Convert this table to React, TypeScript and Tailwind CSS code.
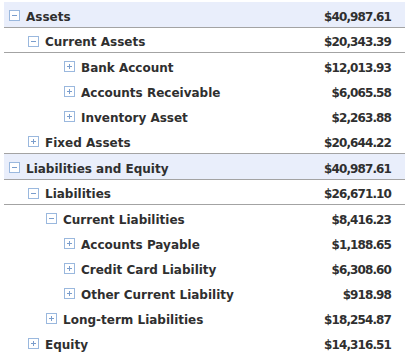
import React from 'react';

type Row = {
  label: string;
  amount: string;
  indent: number;
  open: boolean;
  top?: boolean;
  line?: boolean;
};

const rows: Row[] = [
  { label: 'Assets', amount: '$40,987.61', indent: 0, open: true, top: true },
  { label: 'Current Assets', amount: '$20,343.39', indent: 19, open: true, line: true },
  { label: 'Bank Account', amount: '$12,013.93', indent: 55, open: false },
  { label: 'Accounts Receivable', amount: '$6,065.58', indent: 55, open: false },
  { label: 'Inventory Asset', amount: '$2,263.88', indent: 55, open: false },
  { label: 'Fixed Assets', amount: '$20,644.22', indent: 19, open: false },
  { label: 'Liabilities and Equity', amount: '$40,987.61', indent: 0, open: true, top: true },
  { label: 'Liabilities', amount: '$26,671.10', indent: 19, open: true, line: true },
  { label: 'Current Liabilities', amount: '$8,416.23', indent: 37, open: true },
  { label: 'Accounts Payable', amount: '$1,188.65', indent: 55, open: false },
  { label: 'Credit Card Liability', amount: '$6,308.60', indent: 55, open: false },
  { label: 'Other Current Liability', amount: '$918.98', indent: 55, open: false },
  { label: 'Long-term Liabilities', amount: '$18,254.87', indent: 37, open: false },
  { label: 'Equity', amount: '$14,316.51', indent: 19, open: false },
];

const Toggle = ({ open }: { open: boolean }) => (
  <svg width="11" height="11" viewBox="0 0 11 11" className="shrink-0 -mt-[2px]">
    <rect x="0.5" y="0.5" width="10" height="10" fill="#fff" stroke="#9ab8de" />
    <line x1="3" y1="5.5" x2="8" y2="5.5" stroke="#7a9dcc" />
    {!open && <line x1="5.5" y1="3" x2="5.5" y2="8" stroke="#7a9dcc" />}
  </svg>
);

export default function App() {
  return (
    <div className="bg-white w-[411px] h-[355px] overflow-hidden pt-[2px] pl-[4px] font-['DejaVu_Sans',Verdana,sans-serif] text-[12px] font-bold text-[#2f2f2f]">
      <div className="w-[401px]">
        {rows.map((r, i) => (
          <div
            key={i}
            className={
              r.top
                ? `flex items-center pt-[4px] bg-[#e9eefb] border-b border-[#a3a3a3] ${i > 0 ? 'border-t h-[27px]' : 'h-[26px]'}`
                : `flex items-center pt-[4px] h-[25px] ${r.line ? 'border-b border-[#a3a3a3]' : ''}`
            }
          >
            <div className="flex items-center gap-[6px] flex-1" style={{ paddingLeft: 5 + r.indent }}>
              <Toggle open={r.open} />
              <span>{r.label}</span>
            </div>
            <div className="pr-[14px] tracking-[-0.9px]">{r.amount}</div>
          </div>
        ))}
      </div>
    </div>
  );
}
